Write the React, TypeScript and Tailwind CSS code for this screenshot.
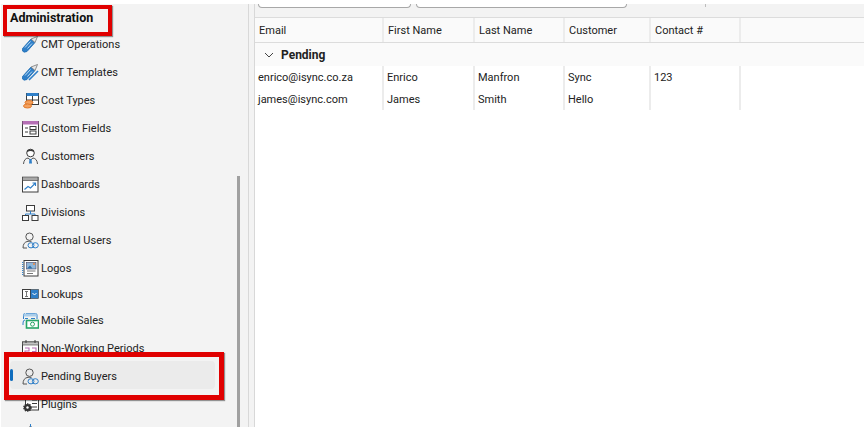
import React from "react";

const D = "#3c3c3c";
const B = "#2f7fc8";
const Svg = ({ children }: { children: React.ReactNode }) => (
  <svg width="17" height="17" viewBox="0 0 17 17" fill="none" className="shrink-0">{children}</svg>
);

const Pencil = ({ double }: { double?: boolean }) => (
  <Svg>
    <path d="M0.5 12.5 L9 3 L13 6.5 L5 15.5 Q1.5 17 0.5 15 Z" fill={B} stroke="#1f6fb5" strokeWidth="0.8" />
    <path d="M9 3 L15.5 0.5 L13 6.5 Z" fill="#e8e8e8" stroke="#777" strokeWidth="0.8" />
    <path d="M3 11.5 L8.5 5.5 M5.5 12.5 L10 7.5" stroke="#bcdcf5" strokeWidth="1" />
    {double && <path d="M7 16 L16 7" stroke={B} strokeWidth="1.6" />}
  </Svg>
);
const CostIcon = () => (
  <Svg>
    <rect x="4.5" y="1.5" width="12" height="11" fill="#fff" stroke={D} />
    <rect x="4.5" y="1" width="12" height="3" fill={B} />
    <path d="M4.5 8 H16.5 M10.5 4 V12.5" stroke={D} />
    <ellipse cx="7" cy="10.5" rx="4" ry="2" fill="#f3a15f" stroke="#e27b2c" />
    <ellipse cx="5.5" cy="14" rx="4" ry="2" fill="#f3a15f" stroke="#e27b2c" />
  </Svg>
);
const FieldsIcon = () => (
  <Svg>
    <rect x="0.5" y="1.5" width="16" height="15" fill="#fff" stroke={D} />
    <rect x="0.5" y="1" width="16" height="3.5" fill="#b56fb5" />
    <path d="M3 8 H6 M3 12 H6" stroke={D} />
    <rect x="8" y="6.5" width="6" height="3" stroke={D} />
    <rect x="8" y="11" width="6" height="3" stroke={D} />
  </Svg>
);
const CustomerIcon = () => (
  <Svg>
    <circle cx="8.5" cy="5" r="3.8" fill="#fff" stroke={D} />
    <path d="M5 3.5 Q8.5 1 12 3.5" stroke={D} strokeWidth="1.4" />
    <path d="M1.5 16 Q2 10.5 6 10 L8.5 12 L11 10 Q15 10.5 15.5 16" stroke="#555" />
    <path d="M7.5 11 H9.5 L10 15.5 H7 Z" fill={B} />
  </Svg>
);
const DashIcon = () => (
  <Svg>
    <rect x="0.5" y="1.5" width="15.5" height="14.5" fill="#fff" stroke={D} />
    <rect x="0.5" y="1" width="15.5" height="3.5" fill="#a8a8a8" stroke={D} strokeWidth="0.6" />
    <path d="M2.5 13.5 L6 10.5 L8.5 12 L13 7.5 M10.5 7 H13.5 V10" stroke={B} strokeWidth="1.1" />
  </Svg>
);
const DivIcon = () => (
  <Svg>
    <rect x="4.5" y="1.5" width="8" height="5.5" fill="#fff" stroke={D} />
    <path d="M8.5 7 V10 M3.5 12 V10 H13 V12" stroke={B} />
    <rect x="0.5" y="11.5" width="6" height="5" fill="#fff" stroke={D} />
    <rect x="10" y="11.5" width="6" height="5" fill="#fff" stroke={D} />
  </Svg>
);
const LinkUserIcon = () => (
  <Svg>
    <circle cx="7.5" cy="4.7" r="3.7" stroke="#555" />
    <path d="M1 16 Q1 10 6 9.3 Q8 9 9.5 9.6 M1 16 H5" stroke="#555" />
    <ellipse cx="9" cy="13.3" rx="3" ry="2.6" stroke={B} />
    <ellipse cx="13.3" cy="13.3" rx="3" ry="2.6" stroke={B} />
  </Svg>
);
const LogoIcon = () => (
  <Svg>
    <rect x="2" y="0.5" width="14" height="15.5" fill="#fff" stroke={D} />
    <rect x="4.5" y="2.5" width="9.5" height="6.5" fill="#8fb7da" stroke="#446" strokeWidth="0.6" />
    <path d="M5 8.5 L8 5.5 L10.5 8.5 Z" fill="#2f6fa8" />
    <circle cx="12" cy="4" r="1" fill="#f0873a" />
    <path d="M5 11 H13.5 M5 13.5 H11" stroke="#777" />
    <path d="M0.7 2 V15" stroke={B} strokeWidth="1.2" strokeDasharray="1 1" />
  </Svg>
);
const LookupIcon = () => (
  <Svg>
    <rect x="0.5" y="3.5" width="8" height="9" fill="#fff" stroke={D} />
    <path d="M3 5.5 H6 M4.5 5.5 V10.5 M3 10.5 H6" stroke="#777" />
    <rect x="8.5" y="3.5" width="8" height="9" fill={B} stroke={D} strokeWidth="0.6" />
    <path d="M10.5 7 L12.5 9 L14.5 7" stroke="#fff" />
  </Svg>
);
const MobileIcon = () => (
  <Svg>
    <path d="M3 8 Q1 8 1 11 V13 M4 1.5 H13.5 Q15 1.5 15 3 V7 M1.5 7 V3 Q1.5 1.5 3 1.5" stroke={B} />
    <rect x="1.5" y="1.5" width="13" height="3" fill="#a9cdea" />
    <path d="M3 6.5 H6 M9 6.5 H13" stroke={B} />
    <rect x="4.5" y="8.5" width="12" height="7.5" fill="#fff" stroke="#27a567" strokeWidth="1.6" />
    <circle cx="10.5" cy="12.2" r="2" stroke="#27a567" />
  </Svg>
);
const CalIcon = () => (
  <Svg>
    <rect x="0.5" y="2" width="16" height="15" fill="#fff" stroke={D} />
    <rect x="0.5" y="2" width="16" height="3" fill="#c4c4c4" stroke={D} strokeWidth="0.6" />
    <path d="M4 0 V3 M13 0 V3" stroke={D} />
    <path d="M3 8 H7 V11 H3 V15 H7 M10 8 H14 V15 H10 M10 11.5 H14" stroke="#b56fb5" strokeWidth="1.1" />
  </Svg>
);
const PluginIcon = () => (
  <Svg>
    <rect x="3.5" y="0.5" width="13" height="13.5" fill="#fff" stroke={D} />
    <path d="M10 4 H15 M10 7.5 H15 M10 11 H15" stroke={D} />
    <circle cx="5.5" cy="11.5" r="3.6" fill="#333" stroke="#333" strokeWidth="1.5" strokeDasharray="1.3 1" />
    <circle cx="5.5" cy="11.5" r="1.2" fill="#fff" />
  </Svg>
);
const HouseIcon = () => (
  <Svg>
    <path d="M2 9 L8.5 2 L15 9" stroke="#555" />
    <path d="M8.5 0 V3" stroke={B} />
  </Svg>
);

const items: { label: string; icon: React.ReactNode; h: string; active?: boolean }[] = [
  { label: "CMT Operations", icon: <Pencil />, h: "h-[28px]" },
  { label: "CMT Templates", icon: <Pencil double />, h: "h-[28px]" },
  { label: "Cost Types", icon: <CostIcon />, h: "h-[28px]" },
  { label: "Custom Fields", icon: <FieldsIcon />, h: "h-[28px]" },
  { label: "Customers", icon: <CustomerIcon />, h: "h-[28px]" },
  { label: "Dashboards", icon: <DashIcon />, h: "h-[28px]" },
  { label: "Divisions", icon: <DivIcon />, h: "h-[28px]" },
  { label: "External Users", icon: <LinkUserIcon />, h: "h-[28px]" },
  { label: "Logos", icon: <LogoIcon />, h: "h-[28px]" },
  { label: "Lookups", icon: <LookupIcon />, h: "h-[24px]" },
  { label: "Mobile Sales", icon: <MobileIcon />, h: "h-[28px]" },
  { label: "Non-Working Periods", icon: <CalIcon />, h: "h-[28px]" },
  { label: "Pending Buyers", icon: <LinkUserIcon />, h: "h-[28px]", active: true },
  { label: "Plugins", icon: <PluginIcon />, h: "h-[28px]" },
  { label: "", icon: <HouseIcon />, h: "h-[28px]" },
];

const columns = ["Email", "First Name", "Last Name", "Customer", "Contact #"];
const colClass = "grid grid-cols-[129px_91px_90px_86px_90px_1fr]";
const rows = [
  ["enrico@isync.co.za", "Enrico", "Manfron", "Sync", "123"],
  ["james@isync.com", "James", "Smith", "Hello", ""],
];

export default function App() {
  return (
    <div
      className="relative flex h-[427px] w-[864px] overflow-hidden bg-white pt-[4px] pl-px text-[11px] text-[#222]"
      style={{ fontFamily: "Roboto, sans-serif" }}
    >
      <aside className="relative flex w-[248px] shrink-0 flex-col overflow-hidden border-r border-[#d8d8d8] bg-[#f3f3f3]">
        <div className="flex h-[25px] shrink-0 items-end pb-[5px] pl-[9px] text-[12.5px] leading-none font-bold text-[#111]">
          Administration
        </div>
        {items.map((it, i) => (
          <div
            key={i}
            className={`relative ml-[9px] flex w-[205px] shrink-0 items-center gap-[2px] rounded-[4px] pt-[2px] pl-[12px] ${it.h} ${it.active ? "bg-[#ebebeb]" : ""}`}
          >
            {it.active && <span className="absolute top-[8px] left-0 h-[12px] w-[3px] rounded-[2px] bg-[#0f6cbd]" />}
            {it.icon}
            <span className="pt-px leading-none whitespace-nowrap">{it.label}</span>
          </div>
        ))}
        <div className="absolute top-[172px] right-[8px] bottom-0 w-[3px] bg-[#a0a0a0]" />
      </aside>

      <div className="w-[5px] shrink-0 bg-[#f3f3f3]" />

      <main className="flex min-w-0 flex-1 flex-col border-l border-[#d8d8d8]">
        <div className="relative flex h-[13px] shrink-0 gap-[5px] overflow-hidden bg-[#f3f3f3] pl-[3px]">
          <div className="h-[4px] w-[153px] rounded-b-[4px] border-x border-b border-[#a8a8a8] bg-white" />
          <div className="h-[4px] w-[211px] rounded-b-[4px] border-x border-b border-[#a8a8a8] bg-white" />
          <div className="ml-[73px] h-[3px] w-px bg-[#bdbdbd]" />
        </div>
        <div className={`${colClass} h-[26px] shrink-0 border-y border-[#dcdcdc] bg-[#fafafa]`}>
          {columns.map((c) => (
            <div key={c} className="flex items-center border-r-2 border-[#ececec] pt-[2px] pl-[4px]">{c}</div>
          ))}
          <div />
        </div>
        <div className="flex h-[23px] shrink-0 items-center gap-[7px] bg-[#fafafa] pl-[9px] text-[12px] font-bold">
          <svg width="10" height="6" viewBox="0 0 10 6" fill="none">
            <path d="M1 1 L5 5 L9 1" stroke="#444" strokeWidth="1" />
          </svg>
          Pending
        </div>
        {rows.map((r) => (
          <div key={r[0]} className={`${colClass} h-[22px] shrink-0`}>
            {r.map((c, i) => (
              <div key={i} className="flex items-center border-r-2 border-[#ececec] pt-[2px] pl-[3px] whitespace-nowrap">{c}</div>
            ))}
            <div />
          </div>
        ))}
      </main>

      <div className="absolute top-[5px] left-[3px] h-[31px] w-[109px] border-4 border-[#e00000] shadow-[1px_1px_1px_rgba(0,0,0,0.4)]" />
      <div className="absolute top-[352px] left-[4px] h-[48px] w-[220px] border-[5px] border-[#e00000] shadow-[1px_1px_1px_rgba(0,0,0,0.4)]" />
    </div>
  );
}
